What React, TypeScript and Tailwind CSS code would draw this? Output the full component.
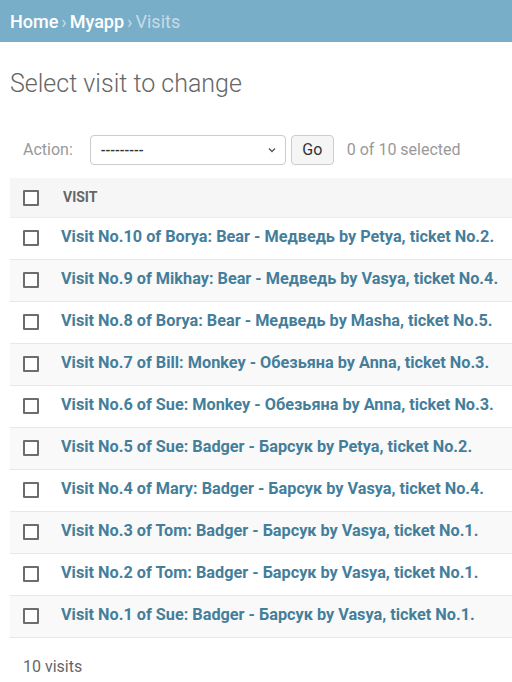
const visits = [
  "Visit No.10 of Borya: Bear - Медведь by Petya, ticket No.2.",
  "Visit No.9 of Mikhay: Bear - Медведь by Vasya, ticket No.4.",
  "Visit No.8 of Borya: Bear - Медведь by Masha, ticket No.5.",
  "Visit No.7 of Bill: Monkey - Обезьяна by Anna, ticket No.3.",
  "Visit No.6 of Sue: Monkey - Обезьяна by Anna, ticket No.3.",
  "Visit No.5 of Sue: Badger - Барсук by Petya, ticket No.2.",
  "Visit No.4 of Mary: Badger - Барсук by Vasya, ticket No.4.",
  "Visit No.3 of Tom: Badger - Барсук by Vasya, ticket No.1.",
  "Visit No.2 of Tom: Badger - Барсук by Vasya, ticket No.1.",
  "Visit No.1 of Sue: Badger - Барсук by Vasya, ticket No.1.",
];

function Box() {
  return <span className="block w-[16px] h-[16px] border-2 border-[#6d6d6d] bg-white rounded-[1px]" />;
}

export default function App() {
  return (
    <div className="w-[512px] min-h-[682px] bg-white font-['Roboto',sans-serif] text-[#333]">
      <div className="h-[42px] bg-[#79aec8] px-[10px] flex items-center text-[18px] text-white">
        <span className="font-medium">Home</span>
        <span className="mx-[3px] text-[#c4dce8]">›</span>
        <span className="font-medium">Myapp</span>
        <span className="mx-[3px] text-[#c4dce8]">›</span>
        <span className="text-[#c4dce8]">Visits</span>
      </div>

      <h1 className="px-[10px] pt-[27px] text-[25px] font-light text-[#666] leading-[30px]">
        Select visit to change
      </h1>

      <div className="mt-[36px] flex items-center pl-[23px] h-[30px] text-[16px]">
        <span className="text-[#999]">Action:</span>
        <div className="ml-[17px] w-[196px] h-[30px] border border-[#ccc] rounded-[4px] flex items-center justify-between pl-[10px] pr-[8px]">
          <span className="text-[14px] text-[#333] font-medium">---------</span>
          <svg width="10" height="10" viewBox="0 0 10 10" fill="none" stroke="#555" strokeWidth="1.3">
            <path d="M2 3.5 L5 6.5 L8 3.5" />
          </svg>
        </div>
        <div className="ml-[5px] w-[43px] h-[30px] border border-[#ccc] rounded-[4px] bg-[#f5f5f5] flex items-center justify-center text-[#333]">
          Go
        </div>
        <span className="ml-[13px] text-[#999]">0 of 10 selected</span>
      </div>

      <div className="ml-[10px] mt-[13px]">
        <div className="h-[40px] bg-[#f6f6f6] flex items-center border-b border-[#eee]">
          <span className="ml-[13px]"><Box /></span>
          <span className="ml-[24px] text-[14px] font-bold text-[#666] uppercase">Visit</span>
        </div>
        {visits.map((v, i) => (
          <div
            key={v}
            className={`h-[42px] flex items-center border-b border-[#e8e8e8] ${i % 2 === 1 ? "bg-[#f9f9f9]" : "bg-white"}`}
          >
            <span className="ml-[13px] -mt-[2px]"><Box /></span>
            <a className="ml-[22px] -mt-[2px] text-[16.25px] font-bold text-[#447e9b] whitespace-nowrap">{v}</a>
          </div>
        ))}
      </div>

      <div className="pl-[23px] pt-[17px] text-[16px] text-[#666]">10 visits</div>
    </div>
  );
}
